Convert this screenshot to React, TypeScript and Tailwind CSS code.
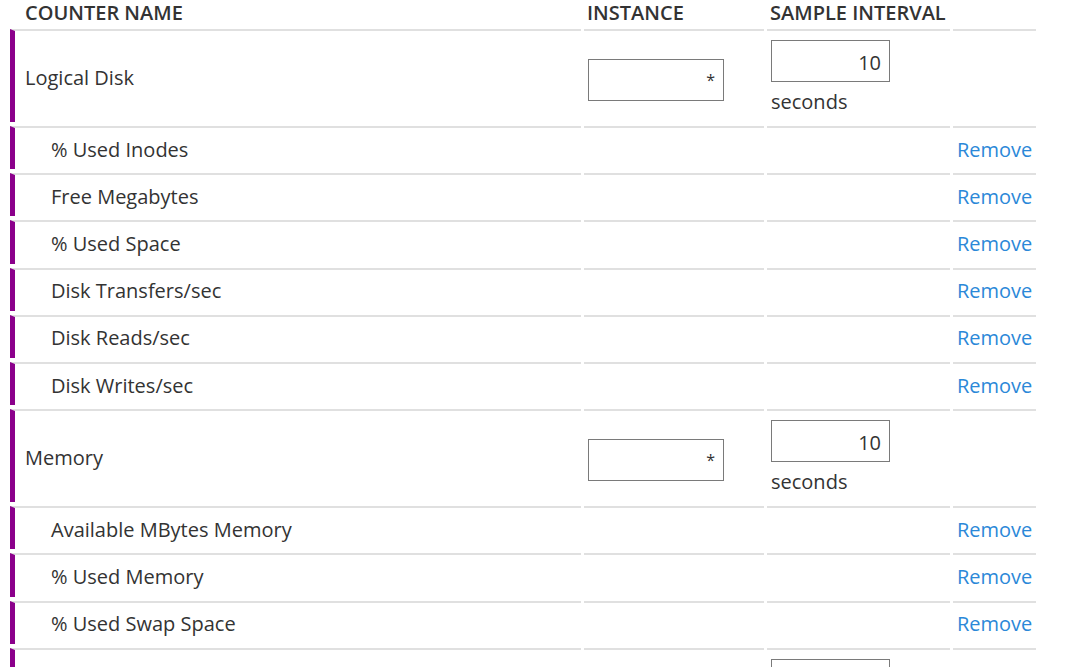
import React from 'react';

const groups = [
  {
    name: 'Logical Disk',
    counters: ['% Used Inodes', 'Free Megabytes', '% Used Space', 'Disk Transfers/sec', 'Disk Reads/sec', 'Disk Writes/sec'],
  },
  { name: 'Memory', counters: ['Available MBytes Memory', '% Used Memory', '% Used Swap Space'] },
  { name: 'Processor', counters: [] as string[] },
];

const grid = 'grid grid-cols-[571px_180px_183px_83px] gap-x-[3px]';
const cell = 'border-t-2 border-[#e0e0e0]';
const nameCell = 'border-t-2 border-l-[5px] border-t-[#e0e0e0] border-l-[#8b008b] flex items-center pt-[2px]';

function GroupRow({ name }: { name: string }) {
  return (
    <div className={`${grid} h-[93px]`}>
      <div className={`${nameCell} pl-[10px]`}>{name}</div>
      <div className={`${cell} flex items-center pl-[4px] pt-[6px]`}>
        <input
          readOnly
          defaultValue="*"
          className="w-[136px] h-[42px] border border-[#7a7a7a] bg-white text-right pr-[8px] text-[16px] text-[#333] outline-none"
        />
      </div>
      <div className={`${cell} pl-[4px] pt-[9px]`}>
        <input
          readOnly
          defaultValue="10"
          className="w-[119px] h-[42px] border border-[#7a7a7a] bg-white text-right pr-[8px] pt-[2px] text-[20px] text-[#333] outline-none"
        />
        <div className="mt-[6px] leading-[28px]">seconds</div>
      </div>
      <div className={cell} />
    </div>
  );
}

function CounterRow({ name }: { name: string }) {
  return (
    <div className={`${grid} h-[43.2px]`}>
      <div className={`${nameCell} pl-[36px]`}>{name}</div>
      <div className={cell} />
      <div className={cell} />
      <div className={`${cell} flex items-center pl-[4px] pt-[2px]`}>
        <a href="#" className="text-[#2b88d8]">Remove</a>
      </div>
    </div>
  );
}

export default function App() {
  return (
    <div className="h-[667px] overflow-hidden bg-white font-['Open_Sans',sans-serif] text-[20px] text-[#333]">
      <div className="pl-[10px] flex flex-col gap-y-[4px]">
        <div className={`${grid} h-[25px] items-end text-[20px] font-semibold uppercase leading-[25px]`}>
          <div className="pl-[15px] mb-[1px]">Counter Name</div>
          <div className="pl-[3px] mb-[1px]">Instance</div>
          <div className="pl-[3px] mb-[1px]">Sample Interval</div>
          <div />
        </div>
        {groups.map((g) => (
          <React.Fragment key={g.name}>
            <GroupRow name={g.name} />
            {g.counters.map((c) => (
              <CounterRow key={c} name={c} />
            ))}
          </React.Fragment>
        ))}
      </div>
    </div>
  );
}
